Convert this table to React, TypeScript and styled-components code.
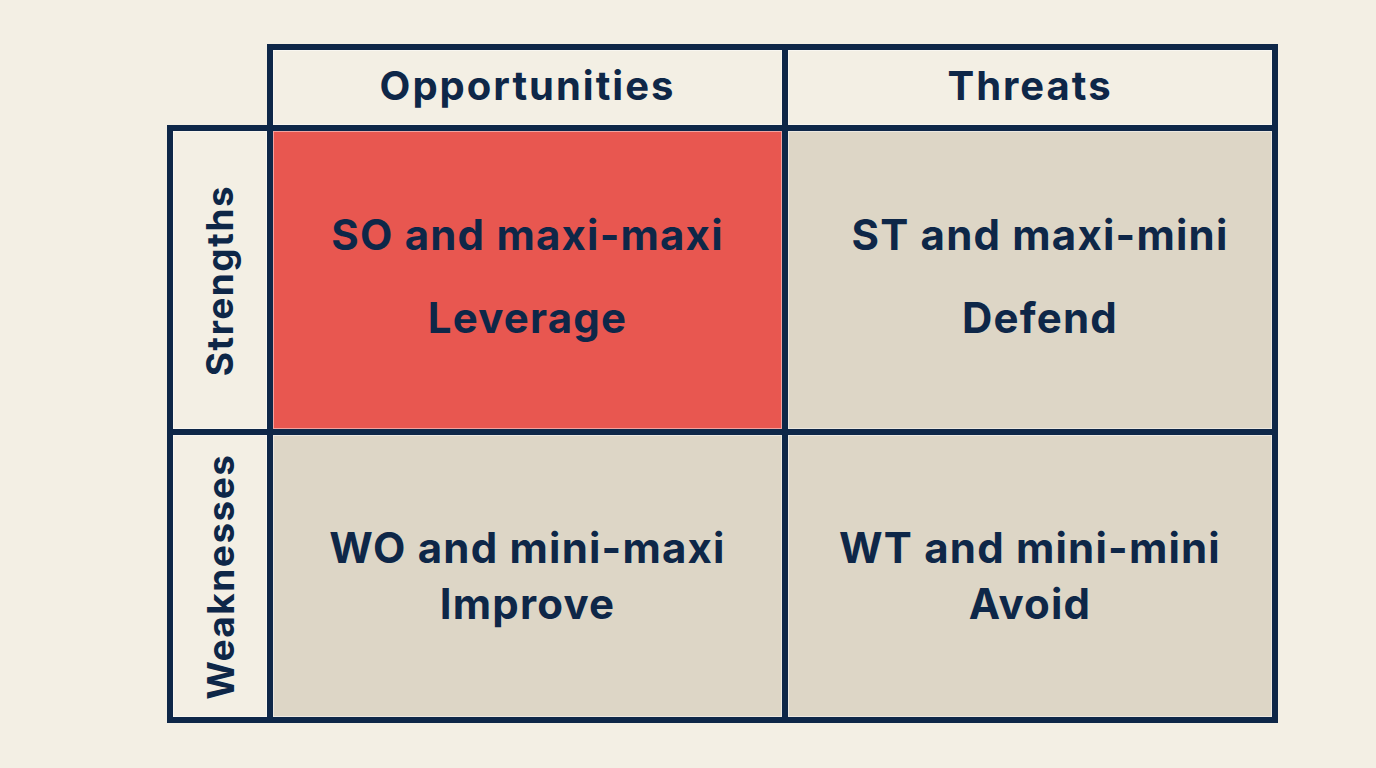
import React from "react";
import styled, { createGlobalStyle } from "styled-components";

const GlobalStyle = createGlobalStyle`
  html, body { margin: 0; padding: 0; background: #f3efe4; }
  body { font-family: Inter, "Liberation Sans", Arial, sans-serif; }
`;

const NAVY = "#0e2748";
const B = 6;

const Page = styled.div`
  width: 1376px;
  height: 768px;
  box-sizing: border-box;
  padding: 44px 0 0 167px;
  background: #f3efe4;
`;

const Matrix = styled.div`
  display: grid;
  grid-template-columns: 100px 515px 496px;
  grid-template-rows: 81px 304px 294px;
`;

const Cell = styled.div<{
  $top?: boolean;
  $left?: boolean;
  $right?: boolean;
  $bottom?: boolean;
  $bg?: string;
  $gap?: number;
  $shiftY?: number;
  $shiftX?: number;
}>`
  box-sizing: border-box;
  display: flex;
  flex-direction: column;
  align-items: center;
  justify-content: center;
  gap: ${(p) => p.$gap ?? 0}px;
  padding-bottom: ${(p) => p.$shiftY ?? 0}px;
  padding-left: ${(p) => p.$shiftX ?? 0}px;
  background: ${(p) => p.$bg ?? "transparent"};
  border-top: ${(p) => (p.$top ? `${B}px solid ${NAVY}` : "none")};
  border-left: ${(p) => (p.$left ? `${B}px solid ${NAVY}` : "none")};
  border-right: ${(p) => (p.$right ? `${B}px solid ${NAVY}` : "none")};
  border-bottom: ${(p) => (p.$bottom ? `${B}px solid ${NAVY}` : "none")};
  box-shadow: ${(p) => (p.$bg ? "inset 0 0 0 1px rgba(255,255,255,0.45)" : "none")};
  color: ${NAVY};
  text-align: center;
`;

const HeaderText = styled.div`
  font-size: 40px;
  font-weight: 700;
  letter-spacing: 2px;
  line-height: 1;
`;

const SideText = styled.div`
  font-size: 37px;
  font-weight: 700;
  letter-spacing: 1.5px;
  line-height: 1;
  transform: rotate(-90deg);
  white-space: nowrap;
`;

const Line = styled.div`
  font-size: 42px;
  font-weight: 700;
  letter-spacing: 1.2px;
  line-height: 1;
  white-space: nowrap;
`;

const CREAM = "#f3efe4";
const BEIGE = "#ddd6c6";
const RED = "#e85750";

export default function App() {
  return (
    <>
      <GlobalStyle />
      <Page>
        <Matrix>
          <Cell />
          <Cell $top $left $bg={CREAM} $shiftY={4}>
            <HeaderText>Opportunities</HeaderText>
          </Cell>
          <Cell $top $left $right $bg={CREAM} $shiftY={4}>
            <HeaderText>Threats</HeaderText>
          </Cell>

          <Cell $top $left $bg={CREAM}>
            <SideText>Strengths</SideText>
          </Cell>
          <Cell $top $left $bg={RED} $gap={41} $shiftY={8}>
            <Line>SO and maxi-maxi</Line>
            <Line>Leverage</Line>
          </Cell>
          <Cell $top $left $right $bg={BEIGE} $gap={41} $shiftY={8} $shiftX={20}>
            <Line>ST and maxi-mini</Line>
            <Line>Defend</Line>
          </Cell>

          <Cell $top $left $bottom $bg={CREAM}>
            <SideText>Weaknesses</SideText>
          </Cell>
          <Cell $top $left $bottom $bg={BEIGE} $gap={14}>
            <Line>WO and mini-maxi</Line>
            <Line>Improve</Line>
          </Cell>
          <Cell $top $left $right $bottom $bg={BEIGE} $gap={14}>
            <Line>WT and mini-mini</Line>
            <Line>Avoid</Line>
          </Cell>
        </Matrix>
      </Page>
    </>
  );
}
